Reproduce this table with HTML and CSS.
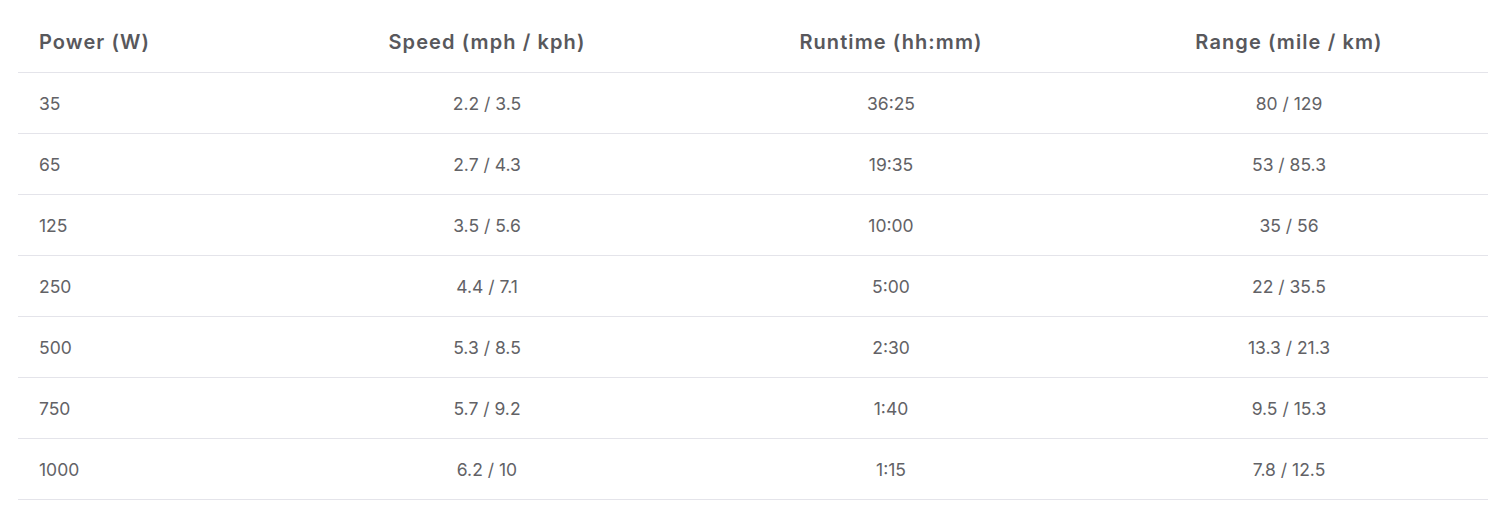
FILE: index.html
```html
<!DOCTYPE html>
<html>
<head>
<meta charset="utf-8">
<link rel="stylesheet" href="styles.css">
</head>
<body>
<div class="wrap">
<table class="spec">
  <colgroup>
    <col class="c1"><col class="c2"><col class="c3"><col class="c4">
  </colgroup>
  <thead>
    <tr><th>Power (W)</th><th>Speed (mph / kph)</th><th>Runtime (hh:mm)</th><th>Range (mile / km)</th></tr>
  </thead>
  <tbody>
    <tr><td>35</td><td>2.2 / 3.5</td><td>36:25</td><td>80 / 129</td></tr>
    <tr><td>65</td><td>2.7 / 4.3</td><td>19:35</td><td>53 / 85.3</td></tr>
    <tr><td>125</td><td>3.5 / 5.6</td><td>10:00</td><td>35 / 56</td></tr>
    <tr><td>250</td><td>4.4 / 7.1</td><td>5:00</td><td>22 / 35.5</td></tr>
    <tr><td>500</td><td>5.3 / 8.5</td><td>2:30</td><td>13.3 / 21.3</td></tr>
    <tr><td>750</td><td>5.7 / 9.2</td><td>1:40</td><td>9.5 / 15.3</td></tr>
    <tr><td>1000</td><td>6.2 / 10</td><td>1:15</td><td>7.8 / 12.5</td></tr>
  </tbody>
</table>
</div>
</body>
</html>
```
FILE: styles.css
```css
html, body { margin: 0; padding: 0; background: #fff; }
.wrap { padding: 12px 13px 0 18px; }
.spec {
  width: 1470px;
  border-collapse: collapse;
  table-layout: fixed;
  font-family: Inter, "Noto Sans", sans-serif;
  color: #5a5a5e;
}
.c1 { width: 264px; }
.c2 { width: 410px; }
.c3 { width: 398px; }
.c4 { width: 398px; }
.spec th, .spec td {
  height: 60px;
  padding: 0;
  border-bottom: 1px solid #e4e4ea;
  text-align: center;
  vertical-align: middle;
  white-space: nowrap;
}
.spec th:first-child, .spec td:first-child { text-align: left; padding-left: 21px; }
.spec th {
  font-size: 20px;
  font-weight: 600;
  color: #58585c;
  letter-spacing: 1.1px;
}
.spec td {
  font-size: 17.5px;
  font-weight: 400;
  color: #626266;
}
```
